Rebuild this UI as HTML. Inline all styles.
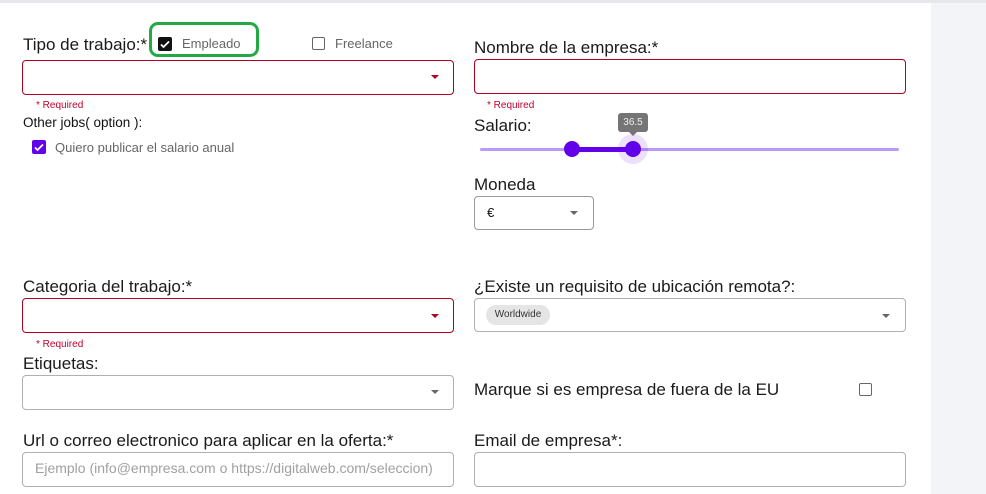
<!DOCTYPE html>
<html><head><meta charset="utf-8"><style>
*{box-sizing:border-box;margin:0;padding:0}
body{width:986px;height:494px;overflow:hidden;background:#fff;font-family:"Liberation Sans",sans-serif;position:relative;color:#111}
.a{position:absolute}
.lbl{font-size:17px;color:#1a1a1a;white-space:nowrap}
.box{position:absolute;border:1px solid #b0b0b0;border-radius:4px;background:#fff}
.red{border-color:#b00020}
.req{position:absolute;font-size:10px;color:#c0002a}
.arr{position:absolute;width:0;height:0;border-left:4.5px solid transparent;border-right:4.5px solid transparent;border-top:4.5px solid #666}
.arr.r{border-top-color:#b00020}
.cb{position:absolute;width:13px;height:13px;border:1.5px solid #666;border-radius:2px}
</style></head><body>
<div class="a" style="left:0;top:0;width:986px;height:3px;background:#e8e8ec"></div>
<div class="a" style="left:931px;top:3px;width:55px;height:491px;background:#f3f4f8"></div>

<div class="a lbl" style="left:23px;top:35px">Tipo de trabajo:*</div>
<div class="a" style="left:149px;top:22px;width:110px;height:35px;border:3px solid #23a845;border-radius:9px"></div>
<div class="a" style="left:158px;top:37px;width:14px;height:14px;background:#111;border-radius:2px"></div>
<svg class="a" style="left:158px;top:37px" width="14" height="14"><path d="M3 7.5l2.5 2.5L11 4.5" stroke="#fff" stroke-width="1.8" fill="none"/></svg>
<div class="a" style="left:182px;top:36px;font-size:13px;color:#666">Empleado</div>
<div class="cb" style="left:312px;top:37px"></div>
<div class="a" style="left:335px;top:36px;font-size:13px;color:#666">Freelance</div>
<div class="box red" style="left:22px;top:60px;width:432px;height:35px"></div>
<div class="arr r" style="left:431px;top:75px"></div>
<div class="req" style="left:36px;top:100px">* Required</div>
<div class="a" style="left:23px;top:115px;font-size:13.5px">Other jobs( option ):</div>
<div class="a" style="left:32px;top:140px;width:14px;height:14px;background:#6200ea;border-radius:2px"></div>
<svg class="a" style="left:32px;top:140px" width="14" height="14"><path d="M3 7.5l2.5 2.5L11 4.5" stroke="#fff" stroke-width="1.8" fill="none"/></svg>
<div class="a" style="left:55px;top:140px;font-size:13px;color:#666">Quiero publicar el salario anual</div>

<div class="a lbl" style="left:23px;top:277px">Categoria del trabajo:*</div>
<div class="box red" style="left:22px;top:298px;width:432px;height:35px"></div>
<div class="arr r" style="left:431px;top:314px"></div>
<div class="req" style="left:36px;top:339px">* Required</div>
<div class="a lbl" style="left:23px;top:354px">Etiquetas:</div>
<div class="box" style="left:22px;top:375px;width:432px;height:35px"></div>
<div class="arr" style="left:431px;top:390px"></div>
<div class="a lbl" style="left:23px;top:431px">Url o correo electronico para aplicar en la oferta:*</div>
<div class="box" style="left:22px;top:452px;width:432px;height:35px"></div>
<div class="a" style="left:35px;top:460px;font-size:14px;color:#a0a0a0">Ejemplo (info@empresa.com o https://digitalweb.com/seleccion)</div>

<div class="a lbl" style="left:474px;top:38px">Nombre de la empresa:*</div>
<div class="box red" style="left:474px;top:59px;width:432px;height:35px"></div>
<div class="req" style="left:487px;top:100px">* Required</div>
<div class="a lbl" style="left:474px;top:116px">Salario:</div>
<div class="a" style="left:480px;top:148px;width:419px;height:3px;background:#bb99f5;border-radius:2px"></div>
<div class="a" style="left:572px;top:147px;width:61px;height:5px;background:#6200ea"></div>
<div class="a" style="left:564px;top:141px;width:16px;height:16px;border-radius:50%;background:#6200ea"></div>
<div class="a" style="left:618px;top:134px;width:30px;height:30px;border-radius:50%;background:rgba(98,0,234,.12)"></div>
<div class="a" style="left:625px;top:141px;width:16px;height:16px;border-radius:50%;background:#6200ea"></div>
<div class="a" style="left:618px;top:113px;width:30px;height:19px;background:#757575;border-radius:3px;color:#eee;font-size:10px;text-align:center;line-height:19px">36.5</div>
<div class="a" style="left:629px;top:132px;width:0;height:0;border-left:4px solid transparent;border-right:4px solid transparent;border-top:4px solid #757575"></div>
<div class="a lbl" style="left:474px;top:175px">Moneda</div>
<div class="box" style="left:474px;top:196px;width:120px;height:34px;border-color:#999"></div>
<div class="a" style="left:487px;top:205px;font-size:13px">€</div>
<div class="arr" style="left:570px;top:211px"></div>

<div class="a lbl" style="left:474px;top:277px">¿Existe un requisito de ubicación remota?:</div>
<div class="box" style="left:474px;top:298px;width:432px;height:34px"></div>
<div class="a" style="left:486px;top:305px;width:64px;height:20px;border-radius:10px;background:#e5e5e5;font-size:10px;color:#333;line-height:20px;text-align:center">Worldwide</div>
<div class="arr" style="left:882px;top:314px"></div>
<div class="a lbl" style="left:474px;top:380px">Marque si es empresa de fuera de la EU</div>
<div class="cb" style="left:859px;top:383px"></div>
<div class="a lbl" style="left:474px;top:431px">Email de empresa*:</div>
<div class="box" style="left:474px;top:452px;width:432px;height:35px"></div>
</body></html>
